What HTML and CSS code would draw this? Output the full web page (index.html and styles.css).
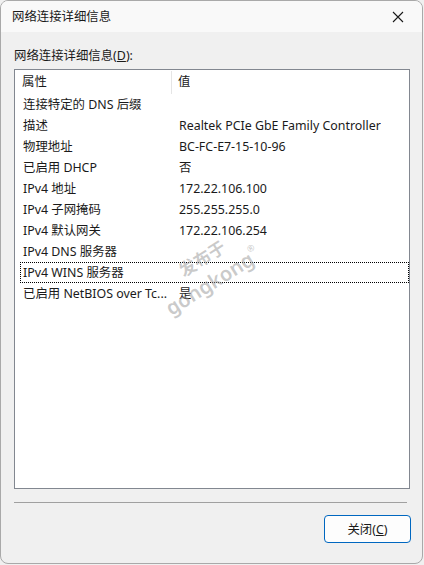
FILE: index.html
```html
<!DOCTYPE html>
<html lang="zh-CN">
<head>
  <meta charset="UTF-8">
  <meta name="viewport" content="width=device-width, initial-scale=1.0">
  <title>网络连接详细信息</title>
  <link rel="stylesheet" href="styles.css">
</head>
<body>
  <div class="dialog">
    <div class="titlebar">
      <span class="title">网络连接详细信息</span>
      <button class="close-x" aria-label="关闭">
        <svg width="12" height="12" viewBox="0 0 12 12">
          <path d="M1 1 L11 11 M11 1 L1 11" stroke="#1a1a1a" stroke-width="1.1" fill="none"/>
        </svg>
      </button>
    </div>

    <div class="content">
      <div class="list-label">网络连接详细信息(<u>D</u>):</div>

      <div class="listview">
        <div class="list-head">
          <div class="col col-prop">属性</div>
          <div class="col col-val">值</div>
        </div>
        <div class="list-body">
          <div class="row"><div class="col col-prop">连接特定的 DNS 后缀</div><div class="col col-val"></div></div>
          <div class="row"><div class="col col-prop">描述</div><div class="col col-val">Realtek PCIe GbE Family Controller</div></div>
          <div class="row"><div class="col col-prop">物理地址</div><div class="col col-val">BC-FC-E7-15-10-96</div></div>
          <div class="row"><div class="col col-prop">已启用 DHCP</div><div class="col col-val">否</div></div>
          <div class="row"><div class="col col-prop">IPv4 地址</div><div class="col col-val">172.22.106.100</div></div>
          <div class="row"><div class="col col-prop">IPv4 子网掩码</div><div class="col col-val">255.255.255.0</div></div>
          <div class="row"><div class="col col-prop">IPv4 默认网关</div><div class="col col-val">172.22.106.254</div></div>
          <div class="row"><div class="col col-prop">IPv4 DNS 服务器</div><div class="col col-val"></div></div>
          <div class="row focused"><div class="col col-prop">IPv4 WINS 服务器</div><div class="col col-val"></div></div>
          <div class="row"><div class="col col-prop">已启用 NetBIOS over Tc...</div><div class="col col-val">是</div></div>
        </div>
        <div class="watermark">
          <span class="wm-top">发布于</span>
          <span class="wm-bottom">gongkong<sup>®</sup></span>
        </div>
      </div>

      <div class="separator"></div>

      <div class="actions">
        <button class="btn">关闭(<u>C</u>)</button>
      </div>
    </div>
  </div>
</body>
</html>
```

FILE: styles.css
```css
* {
  box-sizing: border-box;
  margin: 0;
  padding: 0;
}

html, body {
  width: 424px;
  height: 565px;
  background: #f0f0f0;
  overflow: hidden;
}

body {
  font-family: "Noto Sans", "Noto Sans CJK SC", sans-serif;
  font-size: 12.4px;
  color: #1a1a1a;
}

.dialog {
  width: 423px;
  height: 564px;
  background: #f0f0f0;
  border: 1px solid #a9a9a9;
  border-radius: 8px;
  overflow: hidden;
  display: flex;
  flex-direction: column;
}

.titlebar {
  height: 31px;
  background: #f9f9f9;
  display: flex;
  align-items: center;
  justify-content: space-between;
  padding-left: 11px;
}

.title {
  line-height: 16px;
}

.close-x {
  width: 46px;
  height: 31px;
  border: none;
  background: transparent;
  display: flex;
  align-items: center;
  justify-content: center;
  padding-right: 2px;
}

.content {
  flex: 1;
  display: flex;
  flex-direction: column;
  padding: 16px 12px 0 13px;
}

.list-label {
  line-height: 16px;
  margin-bottom: 5px;
}

.listview {
  position: relative;
  height: 420px;
  width: 396px;
  background: #fff;
  border: 1px solid #828790;
  overflow: hidden;
}

.list-head {
  display: flex;
  height: 24px;
  align-items: center;
}

.list-head .col-prop {
  width: 157px;
  padding-left: 7px;
  border-right: 1px solid #e5e5e5;
  height: 23px;
  display: flex;
  align-items: center;
}

.row {
  display: flex;
  height: 21px;
  align-items: center;
  margin-left: 5px;
  border: 1px solid transparent;
}

.row .col-prop {
  width: 152px;
  padding-left: 2px;
}

.col {
  white-space: nowrap;
  overflow: hidden;
  line-height: 16px;
}

.col-val {
  padding-left: 6px;
}

.focused {
  border: 1px dotted #000;
}

/* site stamp laid over the list */
.watermark {
  position: absolute;
  left: 135px;
  top: 182px;
  width: 110px;
  height: 34px;
  transform: rotate(-32deg);
  color: rgba(150, 150, 150, 0.5);
  font-weight: 600;
  display: flex;
  flex-direction: column;
  align-items: center;
  pointer-events: none;
}

.wm-top {
  font-size: 17px;
  line-height: 14px;
  margin-left: 6px;
}

.wm-bottom {
  font-size: 20px;
  line-height: 20px;
}

.wm-bottom sup {
  font-size: 9px;
  font-weight: normal;
  vertical-align: 12px;
}

.separator {
  height: 1px;
  width: 393px;
  background: #a0a0a0;
  margin-top: 13px;
}

.actions {
  display: flex;
  justify-content: flex-end;
  padding-top: 12px;
}

.btn {
  width: 87px;
  height: 28px;
  background: #fdfdfd;
  border: 1px solid #0067c0;
  border-radius: 4px;
  font-family: "Noto Sans", "Noto Sans CJK SC", sans-serif;
  font-size: 12.4px;
  color: #1a1a1a;
  margin-right: -1px;
}
```
